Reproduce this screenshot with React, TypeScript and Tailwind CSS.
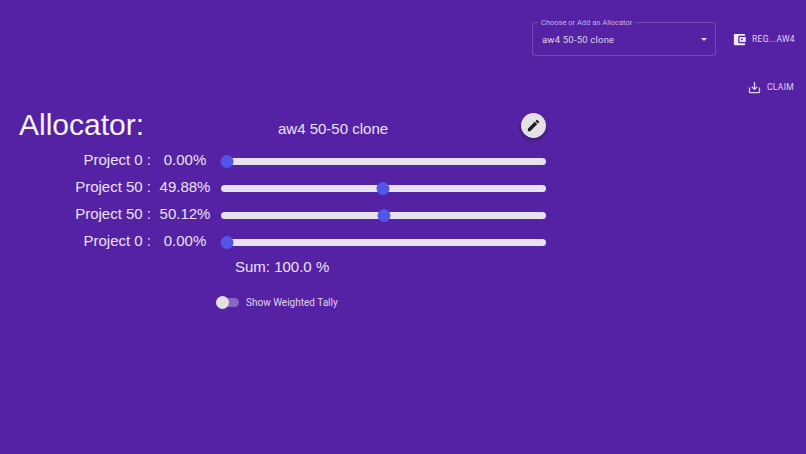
const ROWS = [
  { name: "Project 0 :", value: "0.00%", thumb: 6 },
  { name: "Project 50 :", value: "49.88%", thumb: 162 },
  { name: "Project 50 :", value: "50.12%", thumb: 163 },
  { name: "Project 0 :", value: "0.00%", thumb: 6 },
];

function WalletIcon() {
  return (
    <svg viewBox="0 0 24 24" className="h-[15px] w-[15px] fill-[#f1ebf8]">
      <path d="M21 18v1c0 1.1-.9 2-2 2H5c-1.11 0-2-.9-2-2V5c0-1.1.89-2 2-2h14c1.1 0 2 .9 2 2v1h-9c-1.11 0-2 .9-2 2v8c0 1.1.89 2 2 2h9zm-9-2h10V8H12v8zm4-2.5c-.83 0-1.5-.67-1.5-1.5s.67-1.5 1.5-1.5 1.5.67 1.5 1.5-.67 1.5-1.5 1.5z" />
    </svg>
  );
}

function ClaimIcon() {
  return (
    <svg viewBox="0 0 24 24" className="h-[15px] w-[15px] fill-[#e0d4ee]">
      <path d="M19 12v7H5v-7H3v7c0 1.1.9 2 2 2h14c1.1 0 2-.9 2-2v-7h-2zm-6 .67 2.59-2.58L17 11.5l-5 5-5-5 1.41-1.41L11 12.67V3h2v9.67z" />
    </svg>
  );
}

function EditIcon() {
  return (
    <svg viewBox="0 0 24 24" className="h-[15px] w-[15px] fill-[#1c1c1c]">
      <path d="M3 17.25V21h3.75L17.81 9.94l-3.75-3.75L3 17.25zM20.71 7.04a.996.996 0 0 0 0-1.41l-2.34-2.34a.996.996 0 0 0-1.41 0l-1.83 1.83 3.75 3.75 1.83-1.83z" />
    </svg>
  );
}

function Slider({ thumb }: { thumb: number }) {
  return (
    <div className="relative h-[7px] w-[325px] rounded-full bg-[#e6e2ef]">
      <div
        className="absolute top-[-3px] h-[13px] w-[13px] -translate-x-1/2 rounded-full bg-[#5355e8]"
        style={{ left: thumb }}
      />
    </div>
  );
}

export default function App() {
  return (
    <div className="h-[454px] w-[806px] overflow-hidden bg-[#5522a5] font-['Liberation_Sans',sans-serif] text-[#ebe4f5]">
      <header className="flex items-start pl-[532px] pt-[22px] font-['Roboto',sans-serif]">
        <div className="relative flex h-[34px] w-[184px] items-center justify-between rounded-[3px] border border-[#7449b5] pl-[9px] pr-[8px]">
          <span className="absolute left-[5px] top-[-5px] bg-[#5522a5] px-[3px] text-[7.5px] leading-[9px] text-[#c4b2de]">
            Choose or Add an Allocator
          </span>
          <span className="pt-[2px] text-[9.5px] tracking-[0.2px] text-[#e0d4ee]">aw4 50-50 clone</span>
          <span className="mt-[1px] h-0 w-0 border-x-[3.5px] border-t-[3.5px] border-x-transparent border-t-[#e6dcf2]" />
        </div>
        <div className="ml-[16px] flex h-[34px] items-center gap-[5px] text-[8.5px] tracking-[0.3px] text-[#e0d4ee]">
          <WalletIcon />
          <span>REG...AW4</span>
        </div>
      </header>

      <div className="mt-[24px] flex items-center justify-end gap-[5px] pr-[12px] font-['Roboto',sans-serif] text-[8.5px] tracking-[0.3px] text-[#e0d4ee]">
        <ClaimIcon />
        <span>CLAIM</span>
      </div>

      <section className="mt-[7px] w-[546px]">
        <div className="flex h-[46px] items-center">
          <h1 className="ml-[19px] w-[259px] text-[30px] leading-none text-[#f6f2fb]">Allocator:</h1>
          <span className="mt-[9px] w-[243px] text-[15px]">aw4 50-50 clone</span>
          <button className="flex h-[25px] w-[25px] items-center justify-center rounded-full bg-[#e3e1e6] shadow-[0_2px_4px_rgba(0,0,0,0.35)]">
            <EditIcon />
          </button>
        </div>

        <div className="mt-[-1px] flex flex-col">
          {ROWS.map((row, i) => (
            <div key={i} className="flex h-[27px] items-center text-[15px]">
              <span className="w-[151px] text-right">{row.name}</span>
              <span className="ml-[8px] w-[52px] text-center">{row.value}</span>
              <span className="ml-[10px] pt-[1px]">
                <Slider thumb={row.thumb} />
              </span>
            </div>
          ))}
        </div>

        <p className="ml-[235px] mt-[2px] text-[15px] leading-[20px]">Sum: 100.0 %</p>

        <div className="ml-[216px] mt-[18px] flex items-center font-['Roboto',sans-serif] text-[10px] text-[#e0d4ee]">
          <div className="relative h-[9px] w-[23px] rounded-full bg-[#8a66c4]">
            <div className="absolute left-0 top-[-2px] h-[13px] w-[13px] rounded-full bg-[#e3e1e6]" />
          </div>
          <span className="ml-[7px]">Show Weighted Tally</span>
        </div>
      </section>
    </div>
  );
}
